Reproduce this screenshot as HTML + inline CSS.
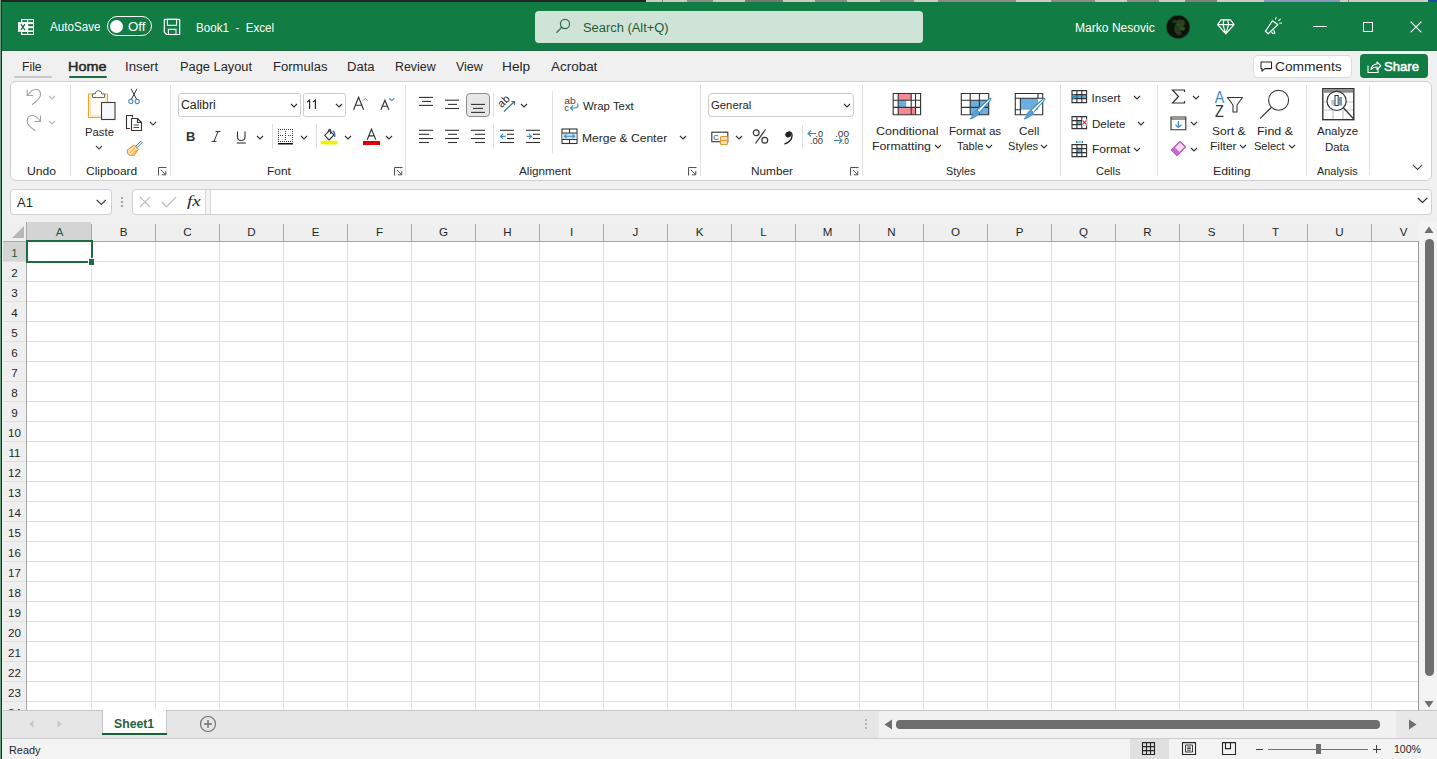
<!DOCTYPE html>
<html><head><meta charset="utf-8">
<style>
*{margin:0;padding:0;box-sizing:border-box}
html,body{width:1437px;height:759px;overflow:hidden;background:#f3f3f3;font-family:"Liberation Sans",sans-serif;color:#262626;position:relative}
.a{position:absolute}
.t{position:absolute;white-space:pre;line-height:normal;transform-origin:0 0}
svg{position:absolute;overflow:visible}
</style></head><body>
<div class="a" style="left:0px;top:0px;width:1437px;height:759px;background:#f0f0f0;"></div>
<div class="a" style="left:0px;top:0px;width:646px;height:2px;background:#222426;"></div>
<div class="a" style="left:646px;top:0px;width:782px;height:2px;background:#cfcbc3;"></div>
<div class="a" style="left:1428px;top:0px;width:9px;height:2px;background:#1a4ea0;"></div>
<div class="a" style="left:687px;top:0px;width:26px;height:2px;background:#555;opacity:0.55"></div>
<div class="a" style="left:745px;top:0px;width:38px;height:2px;background:#333;opacity:0.55"></div>
<div class="a" style="left:815px;top:0px;width:32px;height:2px;background:#555;opacity:0.55"></div>
<div class="a" style="left:880px;top:0px;width:34px;height:2px;background:#555;opacity:0.55"></div>
<div class="a" style="left:938px;top:0px;width:78px;height:2px;background:#555;opacity:0.55"></div>
<div class="a" style="left:1051px;top:0px;width:44px;height:2px;background:#555;opacity:0.55"></div>
<div class="a" style="left:1127px;top:0px;width:32px;height:2px;background:#555;opacity:0.55"></div>
<div class="a" style="left:1185px;top:0px;width:32px;height:2px;background:#444;opacity:0.55"></div>
<div class="a" style="left:1264px;top:0px;width:76px;height:2px;background:#4a6fb0;opacity:0.55"></div>
<div class="a" style="left:662px;top:0px;width:1px;height:2px;background:#888;"></div>
<div class="a" style="left:1348px;top:0px;width:1px;height:2px;background:#888;"></div>
<div class="a" style="left:2px;top:2px;width:1435px;height:48px;background:#117c43;"></div>
<div class="a" style="left:2px;top:50px;width:1435px;height:1px;background:#1e6a43;"></div>
<svg style="left:14px;top:15px;" width="24" height="24" viewBox="0 0 24 24"><rect x="7" y="4" width="13" height="16" fill="#f4fff8"/>
      <g fill="#0f6a38"><rect x="8.3" y="5.2" width="4.9" height="1.7"/><rect x="14.2" y="5.2" width="4.8" height="1.7"/>
      <rect x="14.2" y="9.2" width="4.8" height="1.9"/><rect x="14.2" y="13.3" width="4.8" height="2"/>
      <rect x="8.3" y="17" width="4.9" height="1.8"/><rect x="14.2" y="17" width="4.8" height="1.8"/></g>
      <rect x="4" y="7.1" width="9.3" height="9.7" fill="#f4fff8"/>
      <path d="M6.9 9.2 L10.9 15 M10.9 9.2 L6.9 15" stroke="#2a5a3a" stroke-width="1.25"/></svg>
<div class="t" style="left:50.00px;top:20.00px;font-size:12px;color:#fff;transform:scaleX(0.969);">AutoSave</div>
<div class="a" style="left:107px;top:16px;width:45px;height:20px;background:transparent;border:1.3px solid #fff;border-radius:10px"></div>
<div class="a" style="left:110px;top:20px;width:13px;height:13px;background:#fff;border-radius:50%"></div>
<div class="t" style="left:128.47px;top:20.00px;font-size:12px;color:#fff;transform:scaleX(1.109);">Off</div>
<svg style="left:163px;top:18px;" width="18" height="18" viewBox="0 0 18 18"><path d="M1.3 1.3 H16.7 V16.5 H3.6 L1.3 14.2 Z" fill="none" stroke="#fff" stroke-width="1.2" stroke-linejoin="round"/>
      <rect x="4.4" y="1.3" width="9.2" height="6" fill="none" stroke="#fff" stroke-width="1.1"/>
      <rect x="5.4" y="11.3" width="7.6" height="5.2" fill="none" stroke="#fff" stroke-width="1.1"/></svg>
<div class="t" style="left:195.57px;top:21.00px;font-size:12px;color:#fff;transform:scaleX(0.968);">Book1  -  Excel</div>
<div class="a" style="left:535px;top:11px;width:388px;height:32px;background:#cfe4d6;border-radius:4px"></div>
<svg style="left:554px;top:17px;" width="18" height="18" viewBox="0 0 18 18"><circle cx="11" cy="7" r="4.6" fill="none" stroke="#2f6a48" stroke-width="1.2"/>
      <line x1="7.6" y1="10.4" x2="2.5" y2="15.8" stroke="#2f6a48" stroke-width="1.3"/></svg>
<div class="t" style="left:583.48px;top:21.00px;font-size:12.5px;color:#1f5b39;transform:scaleX(1.032);">Search (Alt+Q)</div>
<div class="t" style="left:1075.43px;top:21.00px;font-size:12px;color:#fff;transform:scaleX(1.006);">Marko Nesovic</div>
<svg style="left:1166px;top:15px;" width="24" height="24" viewBox="0 0 24 24"><circle cx="12.1" cy="12" r="11.8" fill="#0b130a"/>
      <ellipse cx="14.5" cy="8" rx="4.5" ry="3.5" fill="#456a35" opacity="0.55"/>
      <ellipse cx="11.5" cy="13.5" rx="3.5" ry="4.5" fill="#3e6030" opacity="0.5"/>
      <ellipse cx="16.5" cy="13.5" rx="2.5" ry="2.2" fill="#5e8446" opacity="0.5"/>
      <ellipse cx="8.5" cy="6.5" rx="2.2" ry="1.8" fill="#3a5a2a" opacity="0.5"/>
      <ellipse cx="13" cy="18.5" rx="3" ry="2" fill="#38562a" opacity="0.45"/>
      <circle cx="12.1" cy="12" r="11.6" fill="none" stroke="#4d7a55" stroke-width="0.5" opacity="0.6"/></svg>
<svg style="left:1217px;top:19px;" width="18" height="16" viewBox="0 0 18 16"><path d="M4 0.8 H13.5 L17 5.6 L8.8 14.8 L0.6 5.6 Z M0.6 5.6 H17 M7 0.8 L6 5.6 L8.8 14.8 L11.6 5.6 L10.6 0.8" fill="none" stroke="#fff" stroke-width="1.2" stroke-linejoin="round"/></svg>
<svg style="left:1264px;top:17px;" width="19" height="18" viewBox="0 0 19 18"><path d="M1.4 14.3 L8.4 3.8 L13.8 7.6 L4.2 16.8 Z" fill="none" stroke="#fff" stroke-width="1.2" stroke-linejoin="round"/>
      <path d="M7.6 14.6 Q8.4 17.6 10.8 16 L9.8 13.3" fill="none" stroke="#fff" stroke-width="1.1"/>
      <path d="M11.3 2.4 L12.3 0.2 M14.4 3.9 L16.7 1.8 M15.3 6.3 L17.9 6" stroke="#fff" stroke-width="1.1"/></svg>
<div class="a" style="left:1313px;top:26px;width:14px;height:1.3px;background:#fff;"></div>
<div class="a" style="left:1362.5px;top:21.5px;width:10.5px;height:10.5px;background:transparent;border:1.2px solid #fff"></div>
<svg style="left:1410px;top:21px;" width="12" height="12" viewBox="0 0 12 12"><path d="M0.6 0.6 L11.4 11.4 M11.4 0.6 L0.6 11.4" stroke="#fff" stroke-width="1.2"/></svg>
<div class="a" style="left:2px;top:51px;width:1435px;height:31px;background:#f0f0f0;"></div>
<div class="a" style="left:2px;top:51px;width:1435px;height:1px;background:#e2f5e8;"></div>
<div class="t" style="left:22.33px;top:60.00px;font-size:12.5px;color:#262626;transform:scaleX(0.974);">File</div>
<div class="t" style="left:68.05px;top:60.00px;font-size:12.5px;color:#262626;transform:scaleX(1.154);-webkit-text-stroke:0.45px #262626;">Home</div>
<div class="t" style="left:124.81px;top:60.00px;font-size:12.5px;color:#262626;transform:scaleX(1.061);">Insert</div>
<div class="t" style="left:179.97px;top:60.00px;font-size:12.5px;color:#262626;transform:scaleX(1.026);">Page Layout</div>
<div class="t" style="left:272.96px;top:60.00px;font-size:12.5px;color:#262626;transform:scaleX(1.045);">Formulas</div>
<div class="t" style="left:347.15px;top:60.00px;font-size:12.5px;color:#262626;transform:scaleX(1.045);">Data</div>
<div class="t" style="left:395.21px;top:60.00px;font-size:12.5px;color:#262626;transform:scaleX(0.993);">Review</div>
<div class="t" style="left:456.00px;top:60.00px;font-size:12.5px;color:#262626;transform:scaleX(0.994);">View</div>
<div class="t" style="left:502.10px;top:60.00px;font-size:12.5px;color:#262626;transform:scaleX(1.097);">Help</div>
<div class="t" style="left:551.00px;top:60.00px;font-size:12.5px;color:#262626;transform:scaleX(1.076);">Acrobat</div>
<div class="a" style="left:14px;top:75.5px;width:38px;height:2px;background:#c8c8c8;border-radius:1px"></div>
<div class="a" style="left:69px;top:75.5px;width:38px;height:2.5px;background:#1a6b3e;border-radius:1px"></div>
<div class="a" style="left:1252.5px;top:54.5px;width:99px;height:23.5px;background:#fff;border:1px solid #dcdcdc;border-radius:4px"></div>
<svg style="left:1260px;top:61px;" width="13" height="12" viewBox="0 0 13 12"><path d="M1 1 H11.5 V7.6 H4.8 L2 10.2 V7.6 H1 Z" fill="none" stroke="#262626" stroke-width="1.1" stroke-linejoin="round"/></svg>
<div class="t" style="left:1275.31px;top:59.00px;font-size:13px;color:#262626;transform:scaleX(1.060);">Comments</div>
<div class="a" style="left:1360px;top:54px;width:68px;height:24px;background:#117c43;border-radius:4px"></div>
<svg style="left:1367px;top:59px;" width="15" height="15" viewBox="0 0 15 15"><path d="M1 6.5 V13.5 H11 V10" fill="none" stroke="#fff" stroke-width="1.1"/>
      <path d="M4 10.5 q0.5 -5 6 -5.5 V3 L13.8 6.8 L10 10.5 V8 q-4 0 -6 2.5 Z" fill="none" stroke="#fff" stroke-width="1.1" stroke-linejoin="round"/></svg>
<div class="t" style="left:1384.48px;top:59.00px;font-size:13.5px;color:#fff;transform:scaleX(0.972);-webkit-text-stroke:0.5px #fff;">Share</div>
<div class="a" style="left:10px;top:81px;width:1422px;height:100px;background:#fff;border:1px solid #d0d0d0;border-radius:6px"></div>
<svg style="left:25px;top:87px;" width="18" height="20" viewBox="0 0 18 20"><path d="M2.2 2.5 V8.5 H8.2" fill="none" stroke="#a0a0a0" stroke-width="1.1"/><path d="M2.4 8.3 Q6.5 2.5 11 2.5 Q15.5 2.5 15.5 7.5 Q15.5 11.5 7 17.8" fill="none" stroke="#a0a0a0" stroke-width="1.1"/></svg>
<svg style="left:48.3px;top:94.7px;" width="8" height="5.0" viewBox="0 0 8 5.0"><path d="M1 1 L4.0 4.0 L7 1" fill="none" stroke="#b8b8b8" stroke-width="1.1"/></svg>
<svg style="left:25px;top:113px;" width="18" height="20" viewBox="0 0 18 20"><path d="M15.5 2.5 V8.5 H9.5" fill="none" stroke="#a0a0a0" stroke-width="1.1"/><path d="M15.3 8.3 Q11.5 2.5 7 2.5 Q2.2 2.5 2.2 8.5 Q2.2 12.5 10.5 17.8" fill="none" stroke="#a0a0a0" stroke-width="1.1"/></svg>
<svg style="left:48.3px;top:120.3px;" width="8" height="5.0" viewBox="0 0 8 5.0"><path d="M1 1 L4.0 4.0 L7 1" fill="none" stroke="#b8b8b8" stroke-width="1.1"/></svg>
<div class="t" style="left:26.95px;top:164.00px;font-size:11.6px;color:#262626;transform:scaleX(1.045);">Undo</div>
<div class="a" style="left:69.5px;top:85px;width:1px;height:91px;background:#e1e1e1;"></div>
<svg style="left:87px;top:89px;" width="30" height="32" viewBox="0 0 30 32"><path d="M1.5 5 H20.5 V28.5 H1.5 Z" fill="#fffdf5" stroke="#e8a436" stroke-width="1.1"/>
      <path d="M3 6.5 H19 V27 H3 Z" fill="none" stroke="#fbd98a" stroke-width="1"/>
      <path d="M5.5 8.5 V5 H8.2 A3.3 3.3 0 0 1 14.8 5 H17.5 V8.5 Z" fill="#fff" stroke="#6b6b6b" stroke-width="1"/>
      <rect x="14.5" y="13.5" width="13.5" height="17" fill="#f5f9fc" stroke="#3b3b3b" stroke-width="1.1"/></svg>
<div class="t" style="left:84.59px;top:125.00px;font-size:11.6px;color:#262626;transform:scaleX(0.978);">Paste</div>
<svg style="left:94.5px;top:144.7px;" width="8" height="5.0" viewBox="0 0 8 5.0"><path d="M1 1 L4.0 4.0 L7 1" fill="none" stroke="#444" stroke-width="1.1"/></svg>
<svg style="left:128px;top:88px;" width="12" height="17" viewBox="0 0 12 17"><path d="M3 0.8 L8.5 11 M9 0.8 L3.5 11" stroke="#333" stroke-width="1"/>
      <circle cx="2.8" cy="13.5" r="2.1" fill="none" stroke="#4e93c2" stroke-width="1.1"/>
      <circle cx="9.2" cy="13.5" r="2.1" fill="none" stroke="#4e93c2" stroke-width="1.1"/></svg>
<svg style="left:125px;top:114px;" width="18" height="18" viewBox="0 0 18 18"><path d="M7.5 3.5 V1.5 H1.5 V14.5 H5" fill="none" stroke="#333" stroke-width="1.1"/>
      <path d="M6.5 4.5 H12.5 L16.5 8.5 V16.5 H6.5 Z M12.5 4.5 V8.5 H16.5" fill="#fff" stroke="#333" stroke-width="1.1" stroke-linejoin="round"/>
      <path d="M8.5 11 H14 M8.5 13.5 H14" stroke="#333" stroke-width="0.9"/></svg>
<svg style="left:148.7px;top:121.0px;" width="8" height="5.0" viewBox="0 0 8 5.0"><path d="M1 1 L4.0 4.0 L7 1" fill="none" stroke="#444" stroke-width="1.1"/></svg>
<svg style="left:126px;top:140px;" width="17" height="17" viewBox="0 0 17 17"><path d="M9.8 6.2 L14.8 1.2 L16.2 2.6 L11.2 7.6 Z" fill="#dcebf5" stroke="#4e93c2" stroke-width="1"/>
      <path d="M8.2 5.2 L12.2 9.2 L8 15.2 Q4.5 16.2 2 13.8 Q0.6 11.5 1.8 9.6 Z" fill="#fde4b8" stroke="#e8962e" stroke-width="1.1" stroke-linejoin="round"/>
      <path d="M4 12.8 L9.2 7.6 M6 14.6 L10.6 10" stroke="#e8962e" stroke-width="1"/></svg>
<div class="t" style="left:85.90px;top:164.00px;font-size:11.6px;color:#262626;transform:scaleX(1.033);">Clipboard</div>
<svg style="left:158px;top:167px;" width="9" height="9" viewBox="0 0 9 9"><path d="M0.5 8.5 V0.5 H8.5" fill="none" stroke="#555" stroke-width="1"/><path d="M2.8 2.8 L7.8 7.8 M7.8 3.8 V7.8 H3.8" fill="none" stroke="#555" stroke-width="1"/></svg>
<div class="a" style="left:169.5px;top:85px;width:1px;height:91px;background:#e1e1e1;"></div>
<div class="a" style="left:178px;top:93px;width:123px;height:24px;background:#fff;border:1px solid #cdcdcd;border-radius:2.5px"></div>
<div class="t" style="left:180.69px;top:98.00px;font-size:12px;color:#262626;transform:scaleX(1.020);">Calibri</div>
<svg style="left:290.0px;top:102.8px;" width="8" height="5.0" viewBox="0 0 8 5.0"><path d="M1 1 L4.0 4.0 L7 1" fill="none" stroke="#333" stroke-width="1.1"/></svg>
<div class="a" style="left:303px;top:93px;width:43px;height:24px;background:#fff;border:1px solid #cdcdcd;border-radius:2.5px"></div>
<svg style="left:0px;top:0px;" width="1" height="1" viewBox="0 0 1 1"><path d="M307.2 102 L309.6 100.2 V109 M313 102 L315.4 100.2 V109" fill="none" stroke="#262626" stroke-width="1.15"/></svg>
<svg style="left:335.0px;top:102.8px;" width="8" height="5.0" viewBox="0 0 8 5.0"><path d="M1 1 L4.0 4.0 L7 1" fill="none" stroke="#333" stroke-width="1.1"/></svg>
<svg style="left:0px;top:0px;" width="1" height="1" viewBox="0 0 1 1"><path d="M353.6 109.8 L358.6 97.2 L363.6 109.8 M355.4 105.2 H361.8" fill="none" stroke="#333" stroke-width="1.15"/><path d="M362.8 100.8 L365.3 98.3 L367.8 100.8" fill="none" stroke="#7a8a9a" stroke-width="1"/></svg>
<svg style="left:0px;top:0px;" width="1" height="1" viewBox="0 0 1 1"><path d="M380.9 109.8 L384.9 100.2 L388.9 109.8 M382.4 106.2 H387.4" fill="none" stroke="#333" stroke-width="1.15"/><path d="M389.3 98.3 L391.8 100.6 L394.3 98.3" fill="none" stroke="#4e93c2" stroke-width="1.2"/></svg>
<div class="t" style="left:185.73px;top:130.00px;font-size:12px;color:#333;font-weight:bold;transform:scaleX(1.075);">B</div>
<svg style="left:211px;top:131px;" width="10" height="11" viewBox="0 0 10 11"><path d="M4.5 0.6 H9.5 M0.5 10.4 H5.5 M7 0.6 L3 10.4" fill="none" stroke="#333" stroke-width="1"/></svg>
<svg style="left:236px;top:131px;" width="11" height="13" viewBox="0 0 11 13"><path d="M1.5 0.5 V6 Q1.5 9.5 5.3 9.5 Q9 9.5 9 6 V0.5" fill="none" stroke="#333" stroke-width="1.1"/><path d="M0.8 12 H9.8" stroke="#333" stroke-width="1.1"/></svg>
<svg style="left:256.0px;top:135.0px;" width="8" height="5.0" viewBox="0 0 8 5.0"><path d="M1 1 L4.0 4.0 L7 1" fill="none" stroke="#333" stroke-width="1.1"/></svg>
<div class="a" style="left:271.5px;top:124px;width:1px;height:25px;background:#e1e1e1;"></div>
<svg style="left:0px;top:0px;" width="1" height="1" viewBox="0 0 1 1"><path d="M278 129h1v1h-1z M278 141h1v1h-1z M280 129h1v1h-1z M280 141h1v1h-1z M282 129h1v1h-1z M282 141h1v1h-1z M284 129h1v1h-1z M284 141h1v1h-1z M286 129h1v1h-1z M286 141h1v1h-1z M288 129h1v1h-1z M288 141h1v1h-1z M290 129h1v1h-1z M290 141h1v1h-1z M292 129h1v1h-1z M292 141h1v1h-1z M278 131h1v1h-1z M292 131h1v1h-1z M285 131h1v1h-1z M278 133h1v1h-1z M292 133h1v1h-1z M285 133h1v1h-1z M278 135h1v1h-1z M292 135h1v1h-1z M285 135h1v1h-1z M278 137h1v1h-1z M292 137h1v1h-1z M285 137h1v1h-1z M278 139h1v1h-1z M292 139h1v1h-1z M285 139h1v1h-1z M280 135h1v1h-1z M282 135h1v1h-1z M288 135h1v1h-1z M290 135h1v1h-1z " fill="#3a3a3a"/><rect x="278" y="143" width="15" height="1.5" fill="#111"/></svg>
<svg style="left:300.2px;top:135.0px;" width="8" height="5.0" viewBox="0 0 8 5.0"><path d="M1 1 L4.0 4.0 L7 1" fill="none" stroke="#333" stroke-width="1.1"/></svg>
<div class="a" style="left:315.5px;top:124px;width:1px;height:25px;background:#e1e1e1;"></div>
<svg style="left:320px;top:127px;" width="18" height="18" viewBox="0 0 18 18"><path d="M4.7 8.4 L9.5 3.6 L14 8 L9 13 Z" fill="#fff" stroke="#3b3b3b" stroke-width="1.1" stroke-linejoin="round"/>
      <path d="M7.8 5.3 Q9.2 0.8 10.6 2.8 L10.6 7" fill="none" stroke="#3b3b3b" stroke-width="1.1"/>
      <path d="M12.6 3.8 Q15.2 4.8 14.8 10" fill="none" stroke="#3c6fa8" stroke-width="1.3"/>
      <rect x="0.8" y="13.8" width="16.5" height="3.7" rx="1" fill="#f0f000"/></svg>
<svg style="left:344.2px;top:135.0px;" width="8" height="5.0" viewBox="0 0 8 5.0"><path d="M1 1 L4.0 4.0 L7 1" fill="none" stroke="#333" stroke-width="1.1"/></svg>
<svg style="left:0px;top:0px;" width="1" height="1" viewBox="0 0 1 1"><path d="M367.2 139.8 L371.5 129.2 L375.8 139.8 M368.8 135.8 H374.2" fill="none" stroke="#333" stroke-width="1.15"/></svg>
<div class="a" style="left:363px;top:141px;width:16.5px;height:4px;background:#dd0000;"></div>
<svg style="left:385.4px;top:135.0px;" width="8" height="5.0" viewBox="0 0 8 5.0"><path d="M1 1 L4.0 4.0 L7 1" fill="none" stroke="#333" stroke-width="1.1"/></svg>
<div class="t" style="left:266.75px;top:164.00px;font-size:11.6px;color:#262626;transform:scaleX(1.027);">Font</div>
<svg style="left:394px;top:167px;" width="9" height="9" viewBox="0 0 9 9"><path d="M0.5 8.5 V0.5 H8.5" fill="none" stroke="#555" stroke-width="1"/><path d="M2.8 2.8 L7.8 7.8 M7.8 3.8 V7.8 H3.8" fill="none" stroke="#555" stroke-width="1"/></svg>
<div class="a" style="left:405px;top:85px;width:1px;height:91px;background:#e1e1e1;"></div>
<svg style="left:418px;top:95px;" width="16" height="14" viewBox="0 0 16 14"><path d="M1 2.4 H15" stroke="#333" stroke-width="1.1"/><path d="M4 6.4 H13" stroke="#333" stroke-width="1.1"/><path d="M1 10.4 H15" stroke="#333" stroke-width="1.1"/></svg>
<svg style="left:444px;top:98px;" width="16" height="14" viewBox="0 0 16 14"><path d="M1 2.2 H15" stroke="#333" stroke-width="1.1"/><path d="M4 6.4 H13" stroke="#333" stroke-width="1.1"/><path d="M1 10.5 H15" stroke="#333" stroke-width="1.1"/></svg>
<div class="a" style="left:466px;top:93px;width:24px;height:24px;background:#e6e6e6;border:1px solid #8d8d8d;border-radius:4px"></div>
<svg style="left:470px;top:102px;" width="16" height="14" viewBox="0 0 16 14"><path d="M1 2.4 H15" stroke="#333" stroke-width="1.1"/><path d="M3 6.4 H13" stroke="#333" stroke-width="1.1"/><path d="M1 10.4 H15" stroke="#333" stroke-width="1.1"/></svg>
<div class="a" style="left:492.5px;top:93px;width:1px;height:24px;background:#e1e1e1;"></div>
<svg style="left:497px;top:94px;" width="22" height="20" viewBox="0 0 22 20"><text x="0" y="0" transform="translate(4.8 14.2) rotate(-45)" font-family="Liberation Sans" font-size="11" fill="#2a2a2a">ab</text>
      <path d="M7 17.5 L17.5 7.5 M14.3 7.5 H17.5 V10.8" fill="none" stroke="#3d6f8c" stroke-width="1.2"/></svg>
<svg style="left:519.5px;top:102.7px;" width="8" height="5.0" viewBox="0 0 8 5.0"><path d="M1 1 L4.0 4.0 L7 1" fill="none" stroke="#333" stroke-width="1.1"/></svg>
<svg style="left:418px;top:128px;" width="16" height="16" viewBox="0 0 16 16"><path d="M1 2.3 H15" stroke="#333" stroke-width="1.1"/><path d="M1 6.3 H11" stroke="#333" stroke-width="1.1"/><path d="M1 10.5 H15" stroke="#333" stroke-width="1.1"/><path d="M1 14.5 H11" stroke="#333" stroke-width="1.1"/></svg>
<svg style="left:444px;top:128px;" width="16" height="16" viewBox="0 0 16 16"><path d="M1 2.3 H15" stroke="#333" stroke-width="1.1"/><path d="M4 6.3 H13" stroke="#333" stroke-width="1.1"/><path d="M1 10.5 H15" stroke="#333" stroke-width="1.1"/><path d="M4 14.5 H13" stroke="#333" stroke-width="1.1"/></svg>
<svg style="left:470px;top:128px;" width="16" height="16" viewBox="0 0 16 16"><path d="M1 2.3 H15" stroke="#333" stroke-width="1.1"/><path d="M5 6.3 H15" stroke="#333" stroke-width="1.1"/><path d="M1 10.5 H15" stroke="#333" stroke-width="1.1"/><path d="M5 14.5 H15" stroke="#333" stroke-width="1.1"/></svg>
<div class="a" style="left:492.5px;top:124px;width:1px;height:24px;background:#e1e1e1;"></div>
<svg style="left:499px;top:128px;" width="16" height="16" viewBox="0 0 16 16"><path d="M1 2.3 H15" stroke="#333" stroke-width="1.1"/><path d="M8 6.3 H15" stroke="#333" stroke-width="1.1"/><path d="M8 10.5 H15" stroke="#333" stroke-width="1.1"/><path d="M1 14.5 H15" stroke="#333" stroke-width="1.1"/><path d="M1.5 8.4 H6.5 M4 5.9 L1.5 8.4 L4 10.9" fill="none" stroke="#3c8dbc" stroke-width="1.1"/></svg>
<svg style="left:525px;top:128px;" width="16" height="16" viewBox="0 0 16 16"><path d="M1 2.3 H15" stroke="#333" stroke-width="1.1"/><path d="M8 6.3 H15" stroke="#333" stroke-width="1.1"/><path d="M8 10.5 H15" stroke="#333" stroke-width="1.1"/><path d="M1 14.5 H15" stroke="#333" stroke-width="1.1"/><path d="M1.5 8.4 H6.5 M4 5.9 L6.5 8.4 L4 10.9" fill="none" stroke="#3c8dbc" stroke-width="1.1"/></svg>
<div class="a" style="left:551.5px;top:91px;width:1px;height:62px;background:#e1e1e1;"></div>
<svg style="left:563px;top:96px;" width="17" height="17" viewBox="0 0 17 17"><text x="1.2" y="8.2" font-family="Liberation Sans" font-size="9.5" fill="#444" textLength="11.5" lengthAdjust="spacingAndGlyphs">ab</text>
      <text x="1.2" y="15" font-family="Liberation Sans" font-size="9.5" fill="#444">c</text>
      <path d="M14.5 7.5 Q16.5 12 11 12 H7.5 M10 9.5 L7.5 12 L10 14.5" fill="none" stroke="#3c8dbc" stroke-width="1.1"/></svg>
<div class="t" style="left:582.80px;top:99.00px;font-size:11.6px;color:#262626;transform:scaleX(0.980);">Wrap Text</div>
<svg style="left:561px;top:128px;" width="17" height="17" viewBox="0 0 17 17"><rect x="1" y="1" width="15" height="14.5" fill="#fff" stroke="#333" stroke-width="1.1"/>
      <rect x="1.5" y="5" width="14" height="6.5" fill="#cfe5f4"/>
      <path d="M1 5 H16 M1 11.5 H16 M8.5 1 V5 M8.5 11.5 V15.5" stroke="#333" stroke-width="1"/>
      <path d="M3.5 8.2 H13.5 M5.5 6.3 L3.5 8.2 L5.5 10.2 M11.5 6.3 L13.5 8.2 L11.5 10.2" fill="none" stroke="#3c8dbc" stroke-width="1.1"/></svg>
<div class="t" style="left:581.83px;top:131.00px;font-size:11.6px;color:#262626;transform:scaleX(1.041);">Merge &amp; Center</div>
<svg style="left:678.5px;top:135.0px;" width="8" height="5.0" viewBox="0 0 8 5.0"><path d="M1 1 L4.0 4.0 L7 1" fill="none" stroke="#333" stroke-width="1.1"/></svg>
<div class="t" style="left:518.60px;top:164.00px;font-size:11.6px;color:#262626;transform:scaleX(1.011);">Alignment</div>
<svg style="left:688px;top:167px;" width="9" height="9" viewBox="0 0 9 9"><path d="M0.5 8.5 V0.5 H8.5" fill="none" stroke="#555" stroke-width="1"/><path d="M2.8 2.8 L7.8 7.8 M7.8 3.8 V7.8 H3.8" fill="none" stroke="#555" stroke-width="1"/></svg>
<div class="a" style="left:700px;top:85px;width:1px;height:91px;background:#e1e1e1;"></div>
<div class="a" style="left:708px;top:93px;width:146px;height:24px;background:#fff;border:1px solid #cdcdcd;border-radius:4px"></div>
<div class="t" style="left:711.03px;top:98.00px;font-size:11.6px;color:#262626;transform:scaleX(0.976);">General</div>
<svg style="left:843.4px;top:102.7px;" width="8" height="5.0" viewBox="0 0 8 5.0"><path d="M1 1 L4.0 4.0 L7 1" fill="none" stroke="#333" stroke-width="1.1"/></svg>
<svg style="left:711px;top:131px;" width="19" height="15" viewBox="0 0 19 15"><rect x="0.8" y="1.2" width="16" height="9.5" fill="#fff" stroke="#333" stroke-width="1.1"/>
      <text x="2.2" y="8.8" font-family="Liberation Sans" font-size="7.5" fill="#333">C</text>
      <rect x="9.5" y="5.5" width="7" height="8" rx="1" fill="#fbe2b8" stroke="#e8962e" stroke-width="1.1"/>
      <path d="M9.5 9.5 H16.5" stroke="#e8962e" stroke-width="1"/></svg>
<svg style="left:734.5px;top:134.6px;" width="8" height="5.0" viewBox="0 0 8 5.0"><path d="M1 1 L4.0 4.0 L7 1" fill="none" stroke="#333" stroke-width="1.1"/></svg>
<svg style="left:752px;top:128px;" width="18" height="17" viewBox="0 0 18 17"><circle cx="4.2" cy="4.8" r="2.9" fill="none" stroke="#333" stroke-width="1.2"/><circle cx="12.8" cy="12.2" r="2.9" fill="none" stroke="#333" stroke-width="1.2"/><path d="M13.5 1.5 L3.5 15.5" stroke="#333" stroke-width="1.2"/></svg>
<svg style="left:783px;top:131px;" width="10" height="14" viewBox="0 0 10 14"><path d="M5.5 0.8 C8.5 0.8 9.2 3 9 5 C8.8 8.5 6 11.5 1.5 13" fill="none" stroke="#222" stroke-width="1.4"/><circle cx="5.2" cy="3.6" r="2.9" fill="#222"/></svg>
<div class="a" style="left:801.5px;top:124.7px;width:1px;height:24.799999999999997px;background:#e1e1e1;"></div>
<svg style="left:807px;top:129px;" width="18" height="16" viewBox="0 0 18 16"><path d="M1 4.5 H9 M4 1.5 L1 4.5 L4 7.5" fill="none" stroke="#3c8dbc" stroke-width="1.1"/>
      <text x="8.5" y="8" font-family="Liberation Sans" font-size="9.5" fill="#333" textLength="7.5" lengthAdjust="spacingAndGlyphs">.0</text>
      <text x="3" y="15.2" font-family="Liberation Sans" font-size="9.5" fill="#333" textLength="13" lengthAdjust="spacingAndGlyphs">.00</text></svg>
<svg style="left:833px;top:129px;" width="18" height="16" viewBox="0 0 18 16"><text x="2" y="8" font-family="Liberation Sans" font-size="9.5" fill="#333" textLength="14" lengthAdjust="spacingAndGlyphs">.00</text>
      <path d="M1 11.5 H9 M6 8.5 L9 11.5 L6 14.5" fill="none" stroke="#3c8dbc" stroke-width="1.1"/>
      <text x="9" y="15.2" font-family="Liberation Sans" font-size="9.5" fill="#333" textLength="7" lengthAdjust="spacingAndGlyphs">.0</text></svg>
<div class="t" style="left:751.25px;top:164.00px;font-size:11.6px;color:#262626;transform:scaleX(1.020);">Number</div>
<svg style="left:850px;top:167px;" width="9" height="9" viewBox="0 0 9 9"><path d="M0.5 8.5 V0.5 H8.5" fill="none" stroke="#555" stroke-width="1"/><path d="M2.8 2.8 L7.8 7.8 M7.8 3.8 V7.8 H3.8" fill="none" stroke="#555" stroke-width="1"/></svg>
<div class="a" style="left:861.5px;top:85px;width:1px;height:91px;background:#e1e1e1;"></div>
<svg style="left:892px;top:92px;" width="30" height="24" viewBox="0 0 30 24"><rect x="6.2" y="1.5" width="13" height="6.7" fill="#f28b96"/>
      <rect x="6.2" y="15.4" width="17" height="7.4" fill="#f28b96"/>
      <rect x="6.2" y="8.2" width="8" height="7.2" fill="#6aaee0"/>
      <path d="M1.2 1.5 H28.6 V22.8 H1.2 Z M1.2 8.2 H28.6 M1.2 15.4 H28.6 M6.2 1.5 V22.8 M19.2 1.5 V22.8 M23.5 1.5 V22.8" fill="none" stroke="#333" stroke-width="1.1"/></svg>
<div class="t" style="left:875.88px;top:124.00px;font-size:11.6px;color:#262626;transform:scaleX(1.077);">Conditional</div>
<div class="t" style="left:871.91px;top:139.00px;font-size:11.6px;color:#262626;transform:scaleX(1.062);">Formatting</div>
<svg style="left:933.6px;top:143.9px;" width="8" height="5.0" viewBox="0 0 8 5.0"><path d="M1 1 L4.0 4.0 L7 1" fill="none" stroke="#333" stroke-width="1.1"/></svg>
<svg style="left:960px;top:92px;" width="32" height="29" viewBox="0 0 32 29"><rect x="10.2" y="8.2" width="18.5" height="14.6" fill="#6aaee0"/>
      <path d="M1.3 1.5 H28.7 V22.8 H1.3 Z M1.3 8.2 H28.7 M1.3 15.4 H28.7 M10.2 1.5 V22.8 M19.4 1.5 V22.8" fill="none" stroke="#333" stroke-width="1.1"/>
      <path d="M17 18 L29.5 6.5 Q31.5 6 30.5 8 L19.5 20.5" fill="#fff" stroke="#3c8dbc" stroke-width="1.1"/>
      <path d="M10 27 Q12 27 15 25 Q19.5 22.5 19.5 20.5 L17 18 Q14 19 13 22 Q12 25.5 10 27 Z" fill="#5aa0d8" stroke="#3c8dbc" stroke-width="0.8"/></svg>
<div class="t" style="left:948.87px;top:124.00px;font-size:11.6px;color:#262626;transform:scaleX(0.999);">Format as</div>
<div class="t" style="left:957.08px;top:139.00px;font-size:11.6px;color:#262626;transform:scaleX(0.949);">Table</div>
<svg style="left:985.2px;top:143.9px;" width="8" height="5.0" viewBox="0 0 8 5.0"><path d="M1 1 L4.0 4.0 L7 1" fill="none" stroke="#333" stroke-width="1.1"/></svg>
<svg style="left:1014px;top:92px;" width="32" height="29" viewBox="0 0 32 29"><rect x="6.4" y="6.2" width="17.6" height="11.5" fill="#6aaee0"/>
      <path d="M1.3 1.5 H28.7 V22.8 H1.3 Z M1.3 6.2 H28.7 M1.3 17.7 H6.4 M6.4 6.2 V22.8 M24 1.5 V6.2" fill="none" stroke="#333" stroke-width="1.1"/>
      <path d="M17 18 L29.5 6.5 Q31.5 6 30.5 8 L19.5 20.5" fill="#fff" stroke="#3c8dbc" stroke-width="1.1"/>
      <path d="M10 27 Q12 27 15 25 Q19.5 22.5 19.5 20.5 L17 18 Q14 19 13 22 Q12 25.5 10 27 Z" fill="#5aa0d8" stroke="#3c8dbc" stroke-width="0.8"/></svg>
<div class="t" style="left:1019.11px;top:124.00px;font-size:11.6px;color:#262626;transform:scaleX(1.017);">Cell</div>
<div class="t" style="left:1008.16px;top:139.00px;font-size:11.6px;color:#262626;transform:scaleX(0.955);">Styles</div>
<svg style="left:1040.1px;top:143.9px;" width="8" height="5.0" viewBox="0 0 8 5.0"><path d="M1 1 L4.0 4.0 L7 1" fill="none" stroke="#333" stroke-width="1.1"/></svg>
<div class="t" style="left:946.17px;top:164.00px;font-size:11.6px;color:#262626;transform:scaleX(0.929);">Styles</div>
<div class="a" style="left:1059.8px;top:85px;width:1px;height:91px;background:#e1e1e1;"></div>
<svg style="left:1071px;top:89.5px;" width="17" height="15" viewBox="0 0 17 15"><rect x="1" y="4.6" width="14.6" height="4" fill="#6aaee0"/><path d="M1 0.6 H15.6 V12.6 H1 Z M1 4.6 H15.6 M1 8.6 H15.6 M5.9 0.6 V12.6 M10.8 0.6 V12.6" fill="none" stroke="#333" stroke-width="1.1"/><path d="M1 6.6 H8 M3.5 4.1 L1 6.6 L3.5 9.1" fill="none" stroke="#3c8dbc" stroke-width="1.2"/></svg>
<div class="t" style="left:1091.56px;top:91.00px;font-size:11.6px;color:#262626;transform:scaleX(1.000);">Insert</div>
<svg style="left:1132.5px;top:94.9px;" width="8" height="5.0" viewBox="0 0 8 5.0"><path d="M1 1 L4.0 4.0 L7 1" fill="none" stroke="#333" stroke-width="1.1"/></svg>
<svg style="left:1071px;top:116px;" width="17" height="15" viewBox="0 0 17 15"><rect x="5.9" y="4.6" width="4.9" height="4" fill="#6aaee0"/><path d="M1 0.6 H15.6 V12.6 H1 Z M1 4.6 H15.6 M1 8.6 H15.6 M5.9 0.6 V12.6 M10.8 0.6 V12.6" fill="none" stroke="#333" stroke-width="1.1"/><rect x="11" y="3.5" width="5" height="6" fill="#fff"/><path d="M11.5 4.5 L15.5 8.5 M15.5 4.5 L11.5 8.5" stroke="#e03c3c" stroke-width="1.1"/></svg>
<div class="t" style="left:1091.67px;top:117.00px;font-size:11.6px;color:#262626;transform:scaleX(0.997);">Delete</div>
<svg style="left:1136.6px;top:120.5px;" width="8" height="5.0" viewBox="0 0 8 5.0"><path d="M1 1 L4.0 4.0 L7 1" fill="none" stroke="#333" stroke-width="1.1"/></svg>
<svg style="left:1071px;top:140.5px;" width="17" height="17" viewBox="0 0 17 17"><rect x="5.9" y="6.6" width="4.9" height="6" fill="#6aaee0"/><path d="M1 3.6 H15.6 V15.6 H1 Z M1 7.6 H15.6 M1 11.6 H15.6 M5.9 3.6 V15.6 M10.8 3.6 V15.6" fill="none" stroke="#333" stroke-width="1.1"/><path d="M5.5 1 H11.5 M5.5 0 V2 M11.5 0 V2" stroke="#3c8dbc" stroke-width="1"/></svg>
<div class="t" style="left:1091.64px;top:142.00px;font-size:11.6px;color:#262626;transform:scaleX(1.038);">Format</div>
<svg style="left:1132.8px;top:146.5px;" width="8" height="5.0" viewBox="0 0 8 5.0"><path d="M1 1 L4.0 4.0 L7 1" fill="none" stroke="#333" stroke-width="1.1"/></svg>
<div class="t" style="left:1095.65px;top:164.00px;font-size:11.6px;color:#262626;transform:scaleX(0.950);">Cells</div>
<div class="a" style="left:1157px;top:85px;width:1px;height:91px;background:#e1e1e1;"></div>
<svg style="left:1171px;top:89px;" width="15" height="16" viewBox="0 0 15 16"><path d="M13.5 3 V1 H1.5 L7.5 7.5 L1.5 14 H13.5 V12" fill="none" stroke="#333" stroke-width="1.2"/></svg>
<svg style="left:1192.3px;top:94.9px;" width="8" height="5.0" viewBox="0 0 8 5.0"><path d="M1 1 L4.0 4.0 L7 1" fill="none" stroke="#333" stroke-width="1.1"/></svg>
<svg style="left:1169.5px;top:115.5px;" width="17" height="15" viewBox="0 0 17 15"><path d="M1 1 H15.8 V13.8 H1 Z M1 3 H15.8" fill="#fff" stroke="#333" stroke-width="1.1"/><path d="M8.4 5 V11.5 M5.5 8.8 L8.4 11.5 L11.3 8.8" fill="none" stroke="#3c8dbc" stroke-width="1.2"/></svg>
<svg style="left:1190.4px;top:120.6px;" width="8" height="5.0" viewBox="0 0 8 5.0"><path d="M1 1 L4.0 4.0 L7 1" fill="none" stroke="#333" stroke-width="1.1"/></svg>
<svg style="left:1169.5px;top:139px;" width="17" height="17" viewBox="0 0 17 17"><path d="M1.5 11 L10 2.5 L15.5 8 L7 16.5 Z" fill="#f3dbf5" stroke="#b54dc0" stroke-width="1.2" stroke-linejoin="round"/><path d="M1.5 11 L4.5 8 L10 13.5 L7 16.5 Z" fill="#c968d3"/></svg>
<svg style="left:1190.4px;top:146.7px;" width="8" height="5.0" viewBox="0 0 8 5.0"><path d="M1 1 L4.0 4.0 L7 1" fill="none" stroke="#333" stroke-width="1.1"/></svg>
<svg style="left:1213px;top:89px;" width="33" height="30" viewBox="0 0 33 30"><text x="1.8" y="13.6" font-family="Liberation Sans" font-size="16.5" fill="#3c8dbc" textLength="9.6" lengthAdjust="spacingAndGlyphs">A</text>
      <text x="2" y="28" font-family="Liberation Sans" font-size="16.5" fill="#333" textLength="8.8" lengthAdjust="spacingAndGlyphs">Z</text>
      <path d="M14.5 8.5 H29.5 L24 16 V23 H20 V16 Z" fill="#fff" stroke="#333" stroke-width="1.1" stroke-linejoin="round"/></svg>
<div class="t" style="left:1212.22px;top:124.00px;font-size:11.6px;color:#262626;transform:scaleX(1.038);">Sort &amp;</div>
<div class="t" style="left:1209.65px;top:139.00px;font-size:11.6px;color:#262626;transform:scaleX(1.028);">Filter</div>
<svg style="left:1238.5px;top:144.1px;" width="8" height="5.0" viewBox="0 0 8 5.0"><path d="M1 1 L4.0 4.0 L7 1" fill="none" stroke="#333" stroke-width="1.1"/></svg>
<svg style="left:1259px;top:89px;" width="31" height="31" viewBox="0 0 31 31"><circle cx="19.6" cy="11.3" r="10" fill="#fff" stroke="#333" stroke-width="1.1"/><path d="M12.3 18.5 L1 29.7" stroke="#333" stroke-width="1.1"/></svg>
<div class="t" style="left:1256.60px;top:124.00px;font-size:11.6px;color:#262626;transform:scaleX(1.076);">Find &amp;</div>
<div class="t" style="left:1254.06px;top:139.00px;font-size:11.6px;color:#262626;transform:scaleX(0.950);">Select</div>
<svg style="left:1287.5px;top:144.1px;" width="8" height="5.0" viewBox="0 0 8 5.0"><path d="M1 1 L4.0 4.0 L7 1" fill="none" stroke="#333" stroke-width="1.1"/></svg>
<div class="t" style="left:1212.51px;top:164.00px;font-size:11.6px;color:#262626;transform:scaleX(1.062);">Editing</div>
<div class="a" style="left:1306.3px;top:85px;width:1px;height:91px;background:#e1e1e1;"></div>
<svg style="left:1321px;top:87px;" width="34" height="34" viewBox="0 0 34 34"><rect x="1.8" y="1.7" width="31" height="31" fill="#fff" stroke="#333" stroke-width="1.4"/>
      <rect x="2.5" y="2.4" width="29.6" height="3.3" fill="#8a8a8a"/>
      <path d="M2.5 15 H32 M2.5 23 H32" stroke="#c4c4c4" stroke-width="1"/>
      <path d="M12 24 V32 M22 24 V32" stroke="#c4c4c4" stroke-width="1.2"/>
      <circle cx="15.6" cy="13.9" r="9.6" fill="#fff" stroke="#333" stroke-width="1.2"/>
      <rect x="10.5" y="13" width="3" height="5.5" fill="#b8c2c8"/>
      <rect x="14" y="8.5" width="3.2" height="10" fill="#fff" stroke="#333" stroke-width="1"/>
      <rect x="17.6" y="10" width="3.4" height="8.5" fill="#6a9cc8"/>
      <path d="M22.4 20.8 L32.5 31.8" stroke="#333" stroke-width="1.3"/></svg>
<div class="t" style="left:1317.30px;top:124.00px;font-size:11.6px;color:#262626;transform:scaleX(0.996);">Analyze</div>
<div class="t" style="left:1325.38px;top:140.00px;font-size:11.6px;color:#262626;transform:scaleX(0.986);">Data</div>
<div class="t" style="left:1317.30px;top:164.00px;font-size:11.6px;color:#262626;transform:scaleX(0.941);">Analysis</div>
<div class="a" style="left:1368.5px;top:86px;width:1px;height:89px;background:#e1e1e1;"></div>
<svg style="left:1412px;top:164px;" width="11" height="7" viewBox="0 0 11 7"><path d="M0.8 0.8 L5.5 5.5 L10.2 0.8" fill="none" stroke="#444" stroke-width="1.1"/></svg>
<div class="a" style="left:10px;top:189px;width:102px;height:26px;background:#fff;border:1px solid #d0d0d0;border-radius:4px"></div>
<div class="t" style="left:17.40px;top:196.00px;font-size:12.5px;color:#262626;transform:scaleX(1.040);">A1</div>
<svg style="left:95.5px;top:199px;" width="11" height="7" viewBox="0 0 11 7"><path d="M0.8 1 L5.3 5.5 L9.8 1" fill="none" stroke="#404040" stroke-width="1.2"/></svg>
<div class="a" style="left:121px;top:197px;width:2px;height:2px;background:#8a8a8a;border-radius:50%"></div>
<div class="a" style="left:121px;top:201px;width:2px;height:2px;background:#8a8a8a;border-radius:50%"></div>
<div class="a" style="left:121px;top:205px;width:2px;height:2px;background:#8a8a8a;border-radius:50%"></div>
<div class="a" style="left:132px;top:189px;width:1300px;height:26px;background:#fff;border:1px solid #d0d0d0;border-radius:4px"></div>
<div class="a" style="left:205px;top:190px;width:6px;height:24px;background:#f4f4f4;border-left:1px solid #d6d6d6;border-right:1px solid #d6d6d6"></div>
<svg style="left:139px;top:196px;" width="12" height="12" viewBox="0 0 12 12"><path d="M0.8 0.8 L11 11 M11 0.8 L0.8 11" stroke="#bdbdbd" stroke-width="1.1"/></svg>
<svg style="left:161px;top:196px;" width="16" height="12" viewBox="0 0 16 12"><path d="M0.8 6 L5.5 11 L15.2 0.8" fill="none" stroke="#bdbdbd" stroke-width="1.1"/></svg>
<div class="t" style="left:186.81px;top:194.00px;font-size:14px;color:#262626;transform:scaleX(1.362);font-family:'Liberation Serif',serif;font-style:italic;">fx</div>
<svg style="left:1417px;top:197px;" width="12" height="7" viewBox="0 0 12 7"><path d="M0.8 1 L5.5 5.5 L10.2 1" fill="none" stroke="#333" stroke-width="1.2"/></svg>
<div class="a" style="left:2px;top:222px;width:1416px;height:19px;background:#efefef;"></div>
<div class="a" style="left:2px;top:241px;width:25px;height:470px;background:#efefef;"></div>
<div class="a" style="left:27px;top:241px;width:1391px;height:470px;background:#fff;"></div>
<div class="a" style="left:27px;top:222px;width:64px;height:19px;background:#d4d4d4;"></div>
<div class="a" style="left:2px;top:242px;width:24px;height:19px;background:#d4d4d4;"></div>
<svg style="left:12px;top:226px;" width="13" height="13" viewBox="0 0 13 13"><path d="M12 0 V12 H0 Z" fill="#b7b7b7"/></svg>
<div class="a" style="left:91px;top:241px;width:1px;height:470px;background:#dfdfdf"></div>
<div class="a" style="left:91px;top:224px;width:1px;height:17px;background:#a9a9a9"></div>
<div class="a" style="left:155px;top:241px;width:1px;height:470px;background:#dfdfdf"></div>
<div class="a" style="left:155px;top:224px;width:1px;height:17px;background:#a9a9a9"></div>
<div class="a" style="left:219px;top:241px;width:1px;height:470px;background:#dfdfdf"></div>
<div class="a" style="left:219px;top:224px;width:1px;height:17px;background:#a9a9a9"></div>
<div class="a" style="left:283px;top:241px;width:1px;height:470px;background:#dfdfdf"></div>
<div class="a" style="left:283px;top:224px;width:1px;height:17px;background:#a9a9a9"></div>
<div class="a" style="left:347px;top:241px;width:1px;height:470px;background:#dfdfdf"></div>
<div class="a" style="left:347px;top:224px;width:1px;height:17px;background:#a9a9a9"></div>
<div class="a" style="left:411px;top:241px;width:1px;height:470px;background:#dfdfdf"></div>
<div class="a" style="left:411px;top:224px;width:1px;height:17px;background:#a9a9a9"></div>
<div class="a" style="left:475px;top:241px;width:1px;height:470px;background:#dfdfdf"></div>
<div class="a" style="left:475px;top:224px;width:1px;height:17px;background:#a9a9a9"></div>
<div class="a" style="left:539px;top:241px;width:1px;height:470px;background:#dfdfdf"></div>
<div class="a" style="left:539px;top:224px;width:1px;height:17px;background:#a9a9a9"></div>
<div class="a" style="left:603px;top:241px;width:1px;height:470px;background:#dfdfdf"></div>
<div class="a" style="left:603px;top:224px;width:1px;height:17px;background:#a9a9a9"></div>
<div class="a" style="left:667px;top:241px;width:1px;height:470px;background:#dfdfdf"></div>
<div class="a" style="left:667px;top:224px;width:1px;height:17px;background:#a9a9a9"></div>
<div class="a" style="left:731px;top:241px;width:1px;height:470px;background:#dfdfdf"></div>
<div class="a" style="left:731px;top:224px;width:1px;height:17px;background:#a9a9a9"></div>
<div class="a" style="left:795px;top:241px;width:1px;height:470px;background:#dfdfdf"></div>
<div class="a" style="left:795px;top:224px;width:1px;height:17px;background:#a9a9a9"></div>
<div class="a" style="left:859px;top:241px;width:1px;height:470px;background:#dfdfdf"></div>
<div class="a" style="left:859px;top:224px;width:1px;height:17px;background:#a9a9a9"></div>
<div class="a" style="left:923px;top:241px;width:1px;height:470px;background:#dfdfdf"></div>
<div class="a" style="left:923px;top:224px;width:1px;height:17px;background:#a9a9a9"></div>
<div class="a" style="left:987px;top:241px;width:1px;height:470px;background:#dfdfdf"></div>
<div class="a" style="left:987px;top:224px;width:1px;height:17px;background:#a9a9a9"></div>
<div class="a" style="left:1051px;top:241px;width:1px;height:470px;background:#dfdfdf"></div>
<div class="a" style="left:1051px;top:224px;width:1px;height:17px;background:#a9a9a9"></div>
<div class="a" style="left:1115px;top:241px;width:1px;height:470px;background:#dfdfdf"></div>
<div class="a" style="left:1115px;top:224px;width:1px;height:17px;background:#a9a9a9"></div>
<div class="a" style="left:1179px;top:241px;width:1px;height:470px;background:#dfdfdf"></div>
<div class="a" style="left:1179px;top:224px;width:1px;height:17px;background:#a9a9a9"></div>
<div class="a" style="left:1243px;top:241px;width:1px;height:470px;background:#dfdfdf"></div>
<div class="a" style="left:1243px;top:224px;width:1px;height:17px;background:#a9a9a9"></div>
<div class="a" style="left:1307px;top:241px;width:1px;height:470px;background:#dfdfdf"></div>
<div class="a" style="left:1307px;top:224px;width:1px;height:17px;background:#a9a9a9"></div>
<div class="a" style="left:1371px;top:241px;width:1px;height:470px;background:#dfdfdf"></div>
<div class="a" style="left:1371px;top:224px;width:1px;height:17px;background:#a9a9a9"></div>
<div class="a" style="left:2px;top:261px;width:1416px;height:1px;background:#dfdfdf"></div>
<div class="a" style="left:2px;top:281px;width:1416px;height:1px;background:#dfdfdf"></div>
<div class="a" style="left:2px;top:301px;width:1416px;height:1px;background:#dfdfdf"></div>
<div class="a" style="left:2px;top:321px;width:1416px;height:1px;background:#dfdfdf"></div>
<div class="a" style="left:2px;top:341px;width:1416px;height:1px;background:#dfdfdf"></div>
<div class="a" style="left:2px;top:361px;width:1416px;height:1px;background:#dfdfdf"></div>
<div class="a" style="left:2px;top:381px;width:1416px;height:1px;background:#dfdfdf"></div>
<div class="a" style="left:2px;top:401px;width:1416px;height:1px;background:#dfdfdf"></div>
<div class="a" style="left:2px;top:421px;width:1416px;height:1px;background:#dfdfdf"></div>
<div class="a" style="left:2px;top:441px;width:1416px;height:1px;background:#dfdfdf"></div>
<div class="a" style="left:2px;top:461px;width:1416px;height:1px;background:#dfdfdf"></div>
<div class="a" style="left:2px;top:481px;width:1416px;height:1px;background:#dfdfdf"></div>
<div class="a" style="left:2px;top:501px;width:1416px;height:1px;background:#dfdfdf"></div>
<div class="a" style="left:2px;top:521px;width:1416px;height:1px;background:#dfdfdf"></div>
<div class="a" style="left:2px;top:541px;width:1416px;height:1px;background:#dfdfdf"></div>
<div class="a" style="left:2px;top:561px;width:1416px;height:1px;background:#dfdfdf"></div>
<div class="a" style="left:2px;top:581px;width:1416px;height:1px;background:#dfdfdf"></div>
<div class="a" style="left:2px;top:601px;width:1416px;height:1px;background:#dfdfdf"></div>
<div class="a" style="left:2px;top:621px;width:1416px;height:1px;background:#dfdfdf"></div>
<div class="a" style="left:2px;top:641px;width:1416px;height:1px;background:#dfdfdf"></div>
<div class="a" style="left:2px;top:661px;width:1416px;height:1px;background:#dfdfdf"></div>
<div class="a" style="left:2px;top:681px;width:1416px;height:1px;background:#dfdfdf"></div>
<div class="a" style="left:2px;top:701px;width:1416px;height:1px;background:#dfdfdf"></div>
<div class="a" style="left:2px;top:241px;width:1416px;height:1px;background:#a9a9a9;"></div>
<div class="a" style="left:26px;top:222px;width:1px;height:489px;background:#a9a9a9;"></div>
<div class="t" style="left:39.5px;top:225.00px;width:40px;text-align:center;font-size:11.6px;color:#1d5c3a">A</div>
<div class="t" style="left:103.5px;top:225.00px;width:40px;text-align:center;font-size:11.6px;color:#262626">B</div>
<div class="t" style="left:167.5px;top:225.00px;width:40px;text-align:center;font-size:11.6px;color:#262626">C</div>
<div class="t" style="left:231.5px;top:225.00px;width:40px;text-align:center;font-size:11.6px;color:#262626">D</div>
<div class="t" style="left:295.5px;top:225.00px;width:40px;text-align:center;font-size:11.6px;color:#262626">E</div>
<div class="t" style="left:359.5px;top:225.00px;width:40px;text-align:center;font-size:11.6px;color:#262626">F</div>
<div class="t" style="left:423.5px;top:225.00px;width:40px;text-align:center;font-size:11.6px;color:#262626">G</div>
<div class="t" style="left:487.5px;top:225.00px;width:40px;text-align:center;font-size:11.6px;color:#262626">H</div>
<div class="t" style="left:551.5px;top:225.00px;width:40px;text-align:center;font-size:11.6px;color:#262626">I</div>
<div class="t" style="left:615.5px;top:225.00px;width:40px;text-align:center;font-size:11.6px;color:#262626">J</div>
<div class="t" style="left:679.5px;top:225.00px;width:40px;text-align:center;font-size:11.6px;color:#262626">K</div>
<div class="t" style="left:743.5px;top:225.00px;width:40px;text-align:center;font-size:11.6px;color:#262626">L</div>
<div class="t" style="left:807.5px;top:225.00px;width:40px;text-align:center;font-size:11.6px;color:#262626">M</div>
<div class="t" style="left:871.5px;top:225.00px;width:40px;text-align:center;font-size:11.6px;color:#262626">N</div>
<div class="t" style="left:935.5px;top:225.00px;width:40px;text-align:center;font-size:11.6px;color:#262626">O</div>
<div class="t" style="left:999.5px;top:225.00px;width:40px;text-align:center;font-size:11.6px;color:#262626">P</div>
<div class="t" style="left:1063.5px;top:225.00px;width:40px;text-align:center;font-size:11.6px;color:#262626">Q</div>
<div class="t" style="left:1127.5px;top:225.00px;width:40px;text-align:center;font-size:11.6px;color:#262626">R</div>
<div class="t" style="left:1191.5px;top:225.00px;width:40px;text-align:center;font-size:11.6px;color:#262626">S</div>
<div class="t" style="left:1255.5px;top:225.00px;width:40px;text-align:center;font-size:11.6px;color:#262626">T</div>
<div class="t" style="left:1319.5px;top:225.00px;width:40px;text-align:center;font-size:11.6px;color:#262626">U</div>
<div class="t" style="left:1383.5px;top:225.00px;width:40px;text-align:center;font-size:11.6px;color:#262626">V</div>
<div class="t" style="left:2px;top:246.00px;width:25px;text-align:center;font-size:11.6px;color:#1d5c3a">1</div>
<div class="t" style="left:2px;top:266.00px;width:25px;text-align:center;font-size:11.6px;color:#262626">2</div>
<div class="t" style="left:2px;top:286.00px;width:25px;text-align:center;font-size:11.6px;color:#262626">3</div>
<div class="t" style="left:2px;top:306.00px;width:25px;text-align:center;font-size:11.6px;color:#262626">4</div>
<div class="t" style="left:2px;top:326.00px;width:25px;text-align:center;font-size:11.6px;color:#262626">5</div>
<div class="t" style="left:2px;top:346.00px;width:25px;text-align:center;font-size:11.6px;color:#262626">6</div>
<div class="t" style="left:2px;top:366.00px;width:25px;text-align:center;font-size:11.6px;color:#262626">7</div>
<div class="t" style="left:2px;top:386.00px;width:25px;text-align:center;font-size:11.6px;color:#262626">8</div>
<div class="t" style="left:2px;top:406.00px;width:25px;text-align:center;font-size:11.6px;color:#262626">9</div>
<div class="t" style="left:2px;top:426.00px;width:25px;text-align:center;font-size:11.6px;color:#262626">10</div>
<div class="t" style="left:2px;top:446.00px;width:25px;text-align:center;font-size:11.6px;color:#262626">11</div>
<div class="t" style="left:2px;top:466.00px;width:25px;text-align:center;font-size:11.6px;color:#262626">12</div>
<div class="t" style="left:2px;top:486.00px;width:25px;text-align:center;font-size:11.6px;color:#262626">13</div>
<div class="t" style="left:2px;top:506.00px;width:25px;text-align:center;font-size:11.6px;color:#262626">14</div>
<div class="t" style="left:2px;top:526.00px;width:25px;text-align:center;font-size:11.6px;color:#262626">15</div>
<div class="t" style="left:2px;top:546.00px;width:25px;text-align:center;font-size:11.6px;color:#262626">16</div>
<div class="t" style="left:2px;top:566.00px;width:25px;text-align:center;font-size:11.6px;color:#262626">17</div>
<div class="t" style="left:2px;top:586.00px;width:25px;text-align:center;font-size:11.6px;color:#262626">18</div>
<div class="t" style="left:2px;top:606.00px;width:25px;text-align:center;font-size:11.6px;color:#262626">19</div>
<div class="t" style="left:2px;top:626.00px;width:25px;text-align:center;font-size:11.6px;color:#262626">20</div>
<div class="t" style="left:2px;top:646.00px;width:25px;text-align:center;font-size:11.6px;color:#262626">21</div>
<div class="t" style="left:2px;top:666.00px;width:25px;text-align:center;font-size:11.6px;color:#262626">22</div>
<div class="t" style="left:2px;top:686.00px;width:25px;text-align:center;font-size:11.6px;color:#262626">23</div>
<div class="t" style="left:2px;top:706.00px;width:25px;text-align:center;font-size:11.6px;color:#262626">24</div>
<div class="a" style="left:26px;top:240px;width:67px;height:23px;background:transparent;border:2px solid #1f6b40"></div>
<div class="a" style="left:89px;top:259px;width:5px;height:6px;background:#1f6b40;outline:1px solid #fff"></div>
<div class="a" style="left:1418px;top:241px;width:1px;height:470px;background:#9a9a9a;"></div>
<div class="a" style="left:1419px;top:222px;width:18px;height:489px;background:#f3f3f3;"></div>
<svg style="left:1424px;top:226px;" width="10" height="8" viewBox="0 0 10 8"><path d="M5 0.5 L9.5 7 H0.5 Z" fill="#6e6e6e"/></svg>
<div class="a" style="left:1425px;top:238.5px;width:9px;height:437px;background:#6e6e6e;border-radius:4.5px"></div>
<svg style="left:1424px;top:700px;" width="10" height="8" viewBox="0 0 10 8"><path d="M5 7.5 L9.5 1 H0.5 Z" fill="#6e6e6e"/></svg>
<div class="a" style="left:2px;top:710px;width:1435px;height:1px;background:#c6c6c6;"></div>
<div class="a" style="left:2px;top:711px;width:877px;height:27px;background:#e6e6e6;"></div>
<div class="a" style="left:879px;top:711px;width:558px;height:27px;background:#f1f1f1;"></div>
<div class="a" style="left:1396px;top:711px;width:41px;height:27px;background:#e8e8e8;"></div>
<svg style="left:28px;top:719px;" width="8" height="10" viewBox="0 0 8 10"><path d="M5.5 1.2 L1.2 5 L5.5 8.8 Z" fill="#c8c8c8"/></svg>
<svg style="left:56px;top:719px;" width="8" height="10" viewBox="0 0 8 10"><path d="M1.5 1.2 L5.8 5 L1.5 8.8 Z" fill="#c8c8c8"/></svg>
<div class="a" style="left:102px;top:710px;width:64.5px;height:25px;background:#fff;border-left:1px solid #c6c6c6;border-right:1px solid #c6c6c6"></div>
<div class="a" style="left:102px;top:733px;width:64.5px;height:2px;background:#1d5e3a;"></div>
<div class="t" style="left:113.96px;top:717.00px;font-size:12.2px;color:#245e3e;font-weight:bold;transform:scaleX(1.004);">Sheet1</div>
<svg style="left:199px;top:715px;" width="18" height="18" viewBox="0 0 18 18"><circle cx="9" cy="9" r="7.5" fill="none" stroke="#6f6f6f" stroke-width="1.2"/><path d="M9 5 V13 M5 9 H13" stroke="#6f6f6f" stroke-width="1.4"/></svg>
<div class="a" style="left:865px;top:719px;width:2px;height:2px;background:#a0a0a0;border-radius:50%"></div>
<div class="a" style="left:865px;top:723px;width:2px;height:2px;background:#a0a0a0;border-radius:50%"></div>
<div class="a" style="left:865px;top:727px;width:2px;height:2px;background:#a0a0a0;border-radius:50%"></div>
<svg style="left:884px;top:719px;" width="9" height="11" viewBox="0 0 9 11"><path d="M8 0.5 V10.5 L0.5 5.5 Z" fill="#6e6e6e"/></svg>
<div class="a" style="left:896px;top:720px;width:483.5px;height:8.5px;background:#6e6e6e;border-radius:4px"></div>
<svg style="left:1408px;top:719px;" width="9" height="11" viewBox="0 0 9 11"><path d="M1 0.5 V10.5 L8.5 5.5 Z" fill="#6e6e6e"/></svg>
<div class="a" style="left:2px;top:738px;width:1435px;height:21px;background:#f3f3f3;"></div>
<div class="a" style="left:2px;top:738px;width:1435px;height:1px;background:#cdcdcd;"></div>
<div class="t" style="left:8.63px;top:744.00px;font-size:11.5px;color:#262626;transform:scaleX(0.944);">Ready</div>
<div class="a" style="left:1129.5px;top:738.5px;width:39.5px;height:20.5px;background:#e0e0e0;"></div>
<svg style="left:1141px;top:742px;" width="15" height="14" viewBox="0 0 15 14"><path d="M1.5 0.6 H13.5 V12.5 H1.5 Z M1.5 4.6 H13.5 M1.5 8.6 H13.5 M5.5 0.6 V12.5 M9.5 0.6 V12.5" fill="none" stroke="#262626" stroke-width="1.1"/></svg>
<svg style="left:1181px;top:742px;" width="16" height="14" viewBox="0 0 16 14"><path d="M1.5 0.6 H14.5 V12.5 H1.5 Z" fill="none" stroke="#262626" stroke-width="1.1"/><path d="M4.5 3 H11.5 V10 H4.5 Z M6.2 5 H9.8 M6.2 6.6 H9.8 M6.2 8.2 H9.8" fill="none" stroke="#262626" stroke-width="0.9"/></svg>
<svg style="left:1221px;top:742px;" width="16" height="14" viewBox="0 0 16 14"><path d="M1.5 0.6 H14.5 V12.5 H1.5 Z M4.5 0.6 V6.6 H9.5 V0.6" fill="none" stroke="#262626" stroke-width="1.1"/></svg>
<div class="a" style="left:1255.5px;top:748.5px;width:7px;height:1.2px;background:#404040;"></div>
<div class="a" style="left:1268px;top:748.5px;width:100px;height:1px;background:#707070;"></div>
<div class="a" style="left:1316px;top:744px;width:5px;height:10px;background:#6e6e6e;"></div>
<div class="a" style="left:1373px;top:748.5px;width:7.5px;height:1.2px;background:#404040;"></div>
<div class="a" style="left:1376.2px;top:745.2px;width:1.2px;height:7.5px;background:#404040;"></div>
<div class="t" style="left:1393.86px;top:743.00px;font-size:11px;color:#262626;transform:scaleX(0.958);">100%</div>
<div class="a" style="left:0px;top:0px;width:1px;height:759px;background:#6f9a80;"></div>
<div class="a" style="left:1px;top:0px;width:1px;height:759px;background:#173825;"></div>
<div class="a" style="left:2px;top:51px;width:1px;height:708px;background:#e4f3e9;"></div>
</body></html>
